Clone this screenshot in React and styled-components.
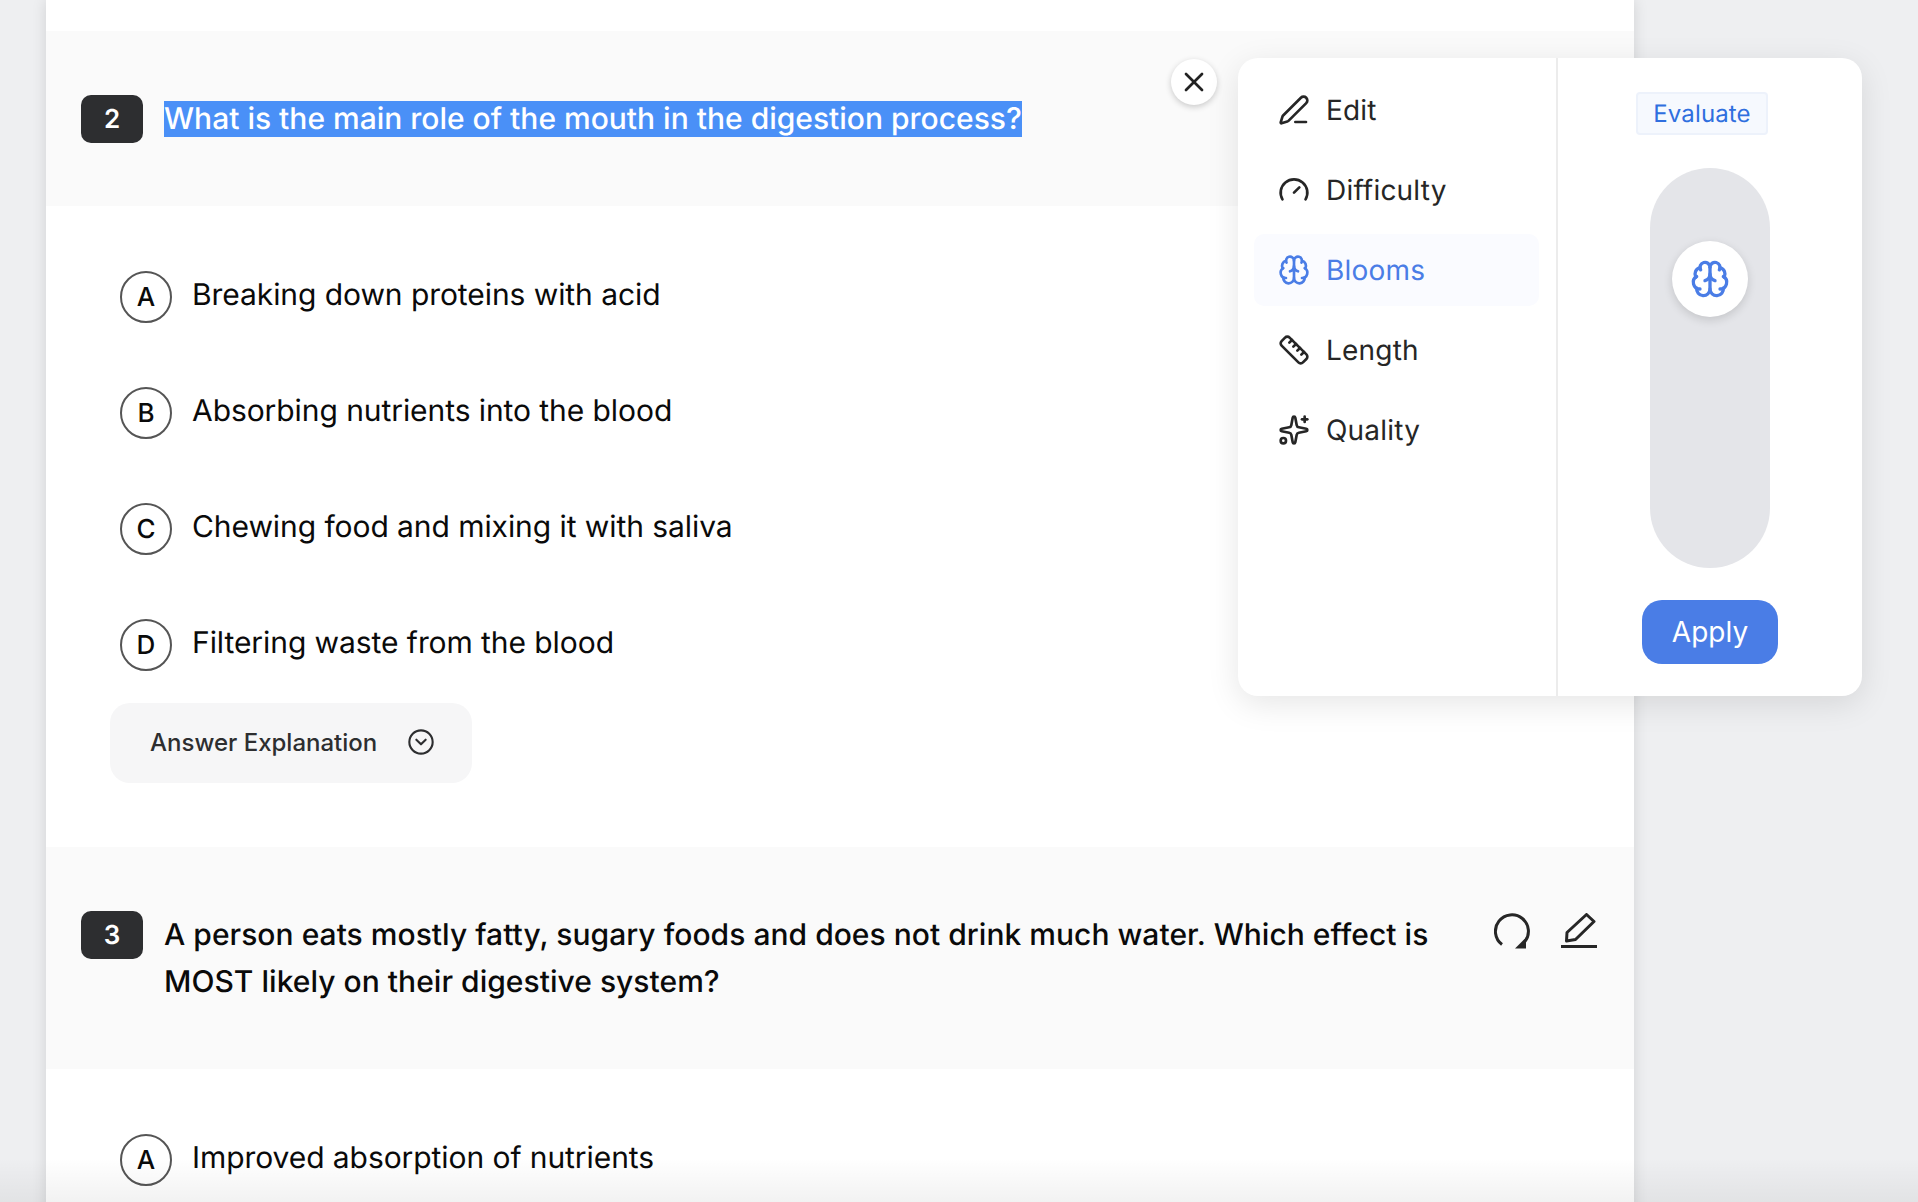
import styled, { createGlobalStyle } from "styled-components";
import {
  Brain,
  CircleChevronDown,
  Gauge,
  PenLine,
  Ruler,
  Sparkles,
  X,
} from "lucide-react";

const GlobalStyle = createGlobalStyle`
  html, body {
    margin: 0;
    padding: 0;
    background: #eeeff1;
  }

  * {
    box-sizing: border-box;
  }
`;

const Page = styled.div`
  position: relative;
  height: 1202px;
  overflow: hidden;
  padding-left: 46px;
  background: #eeeff1;
  font-family: Inter, "Liberation Sans", sans-serif;
  text-rendering: geometricPrecision;
`;

const Sheet = styled.main`
  width: 1588px;
  padding-top: 31px;
  background: #fff;
  box-shadow: 0 0 14px rgba(0, 0, 0, 0.12);
`;

const QuestionHead = styled.header`
  display: flex;
  align-items: flex-start;
  gap: 21px;
  padding: 64px 37px 63px 35px;
  background: #fafafa;
`;

const Badge = styled.span`
  flex: none;
  display: flex;
  align-items: center;
  justify-content: center;
  width: 62px;
  height: 48px;
  border-radius: 10px;
  background: #2d2e30;
  color: #fff;
  font-size: 26px;
  font-weight: 600;
`;

const QuestionText = styled.h2`
  flex: 1;
  margin: 0;
  padding-top: 1px;
  font-size: 30px;
  font-weight: 500;
  line-height: 47px;
  letter-spacing: 0.03px;
  color: #0a0a0a;
`;

const Selected = styled.span`
  background: #4a90f7;
  color: #fff;
  letter-spacing: 0;
`;

const HeadActions = styled.div`
  flex: none;
  display: flex;
  gap: 31px;
  margin-top: 2px;
  margin-left: 40px;
`;

const Answers = styled.section`
  display: flex;
  flex-direction: column;
  padding: 65px 64px 64px;
`;

const OptionList = styled.ul`
  display: flex;
  flex-direction: column;
  gap: 64px;
  margin: 0 0 32px;
  padding: 0 0 0 10px;
  list-style: none;
`;

const Option = styled.li`
  display: flex;
  align-items: center;
  gap: 20px;
  height: 52px;
  font-size: 30px;
  color: #0a0a0a;
`;

const OptionLetter = styled.span`
  flex: none;
  display: flex;
  align-items: center;
  justify-content: center;
  width: 52px;
  height: 52px;
  border: 2px solid #555;
  border-radius: 50%;
  font-size: 26px;
  font-weight: 500;
`;

const OptionLabel = styled.span`
  padding-bottom: 4px;
  letter-spacing: -0.07px;
`;

const ExplainToggle = styled.button`
  display: flex;
  align-items: center;
  justify-content: space-between;
  width: 362px;
  height: 80px;
  padding: 0 37px 2px 40px;
  border: none;
  border-radius: 20px;
  background: #f6f6f7;
  color: #2d2e30;
  font-family: inherit;
  font-size: 24px;
  font-weight: 500;
`;

const CloseButton = styled.button`
  position: absolute;
  top: 59px;
  left: 1171px;
  display: flex;
  align-items: center;
  justify-content: center;
  width: 46px;
  height: 46px;
  padding: 0;
  border: none;
  border-radius: 50%;
  background: #fff;
  color: #222;
  box-shadow: 0 2px 6px rgba(0, 0, 0, 0.2);
`;

const Popover = styled.aside`
  position: absolute;
  top: 58px;
  left: 1238px;
  display: grid;
  grid-template-columns: 320px 1fr;
  width: 624px;
  height: 638px;
  border-radius: 20px;
  background: #fff;
  box-shadow: 0 8px 32px rgba(0, 0, 0, 0.1);
`;

const Menu = styled.nav`
  display: flex;
  flex-direction: column;
  gap: 8px;
  padding: 16px 17px 16px 16px;
  border-right: 2px solid #ececec;
`;

const MenuItem = styled.a`
  display: flex;
  align-items: center;
  gap: 16px;
  height: 72px;
  padding-left: 24px;
  border-radius: 10px;
  background: ${(p) => (p.$active ? "#fafbff" : "transparent")};
  color: ${(p) => (p.$active ? "#4a7de6" : "#262626")};
  font-size: 28px;
  letter-spacing: 0.2px;
`;

const Levels = styled.div`
  display: flex;
  flex-direction: column;
  align-items: center;
  padding-top: 34px;
`;

const EvaluateTag = styled.span`
  display: flex;
  align-items: center;
  height: 43px;
  margin-right: 16px;
  padding: 0 15px;
  border: 2px solid #edf2fb;
  border-radius: 4px;
  background: #f6f9fe;
  color: #2f6fdf;
  font-size: 24px;
  letter-spacing: 0.15px;
`;

const SliderTrack = styled.div`
  position: relative;
  width: 120px;
  height: 400px;
  margin-top: 33px;
  border-radius: 60px;
  background: #e4e5e9;
`;

const SliderThumb = styled.div`
  position: absolute;
  top: 73px;
  left: 22px;
  display: flex;
  align-items: center;
  justify-content: center;
  width: 76px;
  height: 76px;
  border-radius: 50%;
  background: #fff;
  color: #4a7de6;
  box-shadow: 0 3px 10px rgba(0, 0, 0, 0.14);
`;

const ApplyButton = styled.button`
  width: 136px;
  height: 64px;
  margin-top: 32px;
  border: none;
  border-radius: 20px;
  background: #4a7de6;
  color: #fff;
  font-family: inherit;
  font-size: 28px;
`;

const BottomFade = styled.div`
  position: absolute;
  left: 0;
  right: 0;
  bottom: 0;
  height: 44px;
  background: linear-gradient(to bottom, rgba(0, 0, 0, 0), rgba(0, 0, 0, 0.05));
  pointer-events: none;
`;

const RedoIcon = () => (
  <svg width="36" height="36" viewBox="0 0 36 36" fill="none" stroke="#262626" strokeWidth="3">
    <path d="M8 31.5A16.5 16.5 0 1 1 30.5 29" />
    <path d="M21 35.5h11v-11z" fill="#262626" stroke="none" />
  </svg>
);

const PenUnderlineIcon = () => (
  <svg width="36" height="36" viewBox="0 0 36 36" fill="none" stroke="#262626" strokeWidth="3">
    <path d="M25.5 1.5 L33 8.5 L14.5 26.5 L5.5 28 L6 19.5 z" strokeLinejoin="round" />
    <path d="M0 33.5h36" />
  </svg>
);

const QUESTIONS = [
  {
    number: 2,
    text: <Selected>What is the main role of the mouth in the digestion process?</Selected>,
    options: [
      ["A", "Breaking down proteins with acid"],
      ["B", "Absorbing nutrients into the blood"],
      ["C", "Chewing food and mixing it with saliva"],
      ["D", "Filtering waste from the blood"],
    ],
    explain: true,
  },
  {
    number: 3,
    text: "A person eats mostly fatty, sugary foods and does not drink much water. Which effect is MOST likely on their digestive system?",
    options: [["A", "Improved absorption of nutrients"]],
  },
];

const MENU = [
  { label: "Edit", icon: PenLine },
  { label: "Difficulty", icon: Gauge },
  { label: "Blooms", icon: Brain, active: true },
  { label: "Length", icon: Ruler },
  { label: "Quality", icon: Sparkles },
];

export default function App() {
  return (
    <Page>
      <GlobalStyle />
      <Sheet>
        {QUESTIONS.map((q) => (
          <article key={q.number}>
            <QuestionHead>
              <Badge>{q.number}</Badge>
              <QuestionText>{q.text}</QuestionText>
              <HeadActions>
                <RedoIcon />
                <PenUnderlineIcon />
              </HeadActions>
            </QuestionHead>
            <Answers>
              <OptionList>
                {q.options.map(([letter, label]) => (
                  <Option key={letter}>
                    <OptionLetter>{letter}</OptionLetter>
                    <OptionLabel>{label}</OptionLabel>
                  </Option>
                ))}
              </OptionList>
              {q.explain && (
                <ExplainToggle>
                  Answer Explanation
                  <CircleChevronDown size={28} strokeWidth={1.8} />
                </ExplainToggle>
              )}
            </Answers>
          </article>
        ))}
      </Sheet>

      <CloseButton>
        <X size={32} strokeWidth={2} />
      </CloseButton>

      <Popover>
        <Menu>
          {MENU.map(({ label, icon: Icon, active }) => (
            <MenuItem key={label} $active={active}>
              <Icon size={32} strokeWidth={2} />
              {label}
            </MenuItem>
          ))}
        </Menu>
        <Levels>
          <EvaluateTag>Evaluate</EvaluateTag>
          <SliderTrack>
            <SliderThumb>
              <Brain size={40} strokeWidth={2} />
            </SliderThumb>
          </SliderTrack>
          <ApplyButton>Apply</ApplyButton>
        </Levels>
      </Popover>

      <BottomFade />
    </Page>
  );
}
